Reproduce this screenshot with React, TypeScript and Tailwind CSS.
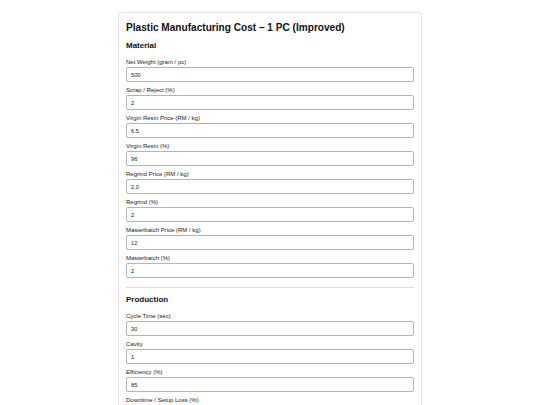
import React from 'react';

type Field = { label: string; value: string };

const material: Field[] = [
  { label: 'Net Weight (gram / pc)', value: '500' },
  { label: 'Scrap / Reject (%)', value: '2' },
  { label: 'Virgin Resin Price (RM / kg)', value: '6.5' },
  { label: 'Virgin Resin (%)', value: '96' },
  { label: 'Regrind Price (RM / kg)', value: '2.0' },
  { label: 'Regrind (%)', value: '2' },
  { label: 'Masterbatch Price (RM / kg)', value: '12' },
  { label: 'Masterbatch (%)', value: '2' },
];

const production: Field[] = [
  { label: 'Cycle Time (sec)', value: '30' },
  { label: 'Cavity', value: '1' },
  { label: 'Efficiency (%)', value: '85' },
  { label: 'Downtime / Setup Loss (%)', value: '5' },
  { label: 'Machine Rate (RM / hr)', value: '25' },
];

const FieldRow: React.FC<{ field: Field; gap?: string }> = ({ field }) => (
  <div className="mb-[4px]">
    <label className="block text-[6px] leading-[8px] text-[#222]">{field.label}</label>
    <input
      type="text"
      readOnly
      defaultValue={field.value}
      className="mt-[1px] block h-[15px] w-full rounded-[2px] border border-[#b4b4b4] bg-white px-[4px] text-[5.7px] text-[#222] outline-none"
    />
  </div>
);

export default function App() {
  return (
    <div className="min-h-screen bg-white pt-[12px] font-['Liberation_Sans',Arial,sans-serif]">
      <div className="mx-auto w-[304px] rounded-[4px] border border-[#e4e4e4] px-[7px] pt-[9px] pb-[10px] shadow-[0_0_3px_rgba(0,0,0,0.06)]">
        <h2 className="text-[10.1px] font-bold leading-[12px] text-[#111]">
          Plastic Manufacturing Cost – 1 PC (Improved)
        </h2>

        {/* Material */}
        <h3 className="mt-[7px] mb-[7px] text-[8px] font-bold leading-[10px] text-[#111]">Material</h3>
        {material.map((f) => (
          <FieldRow key={f.label} field={f} />
        ))}

        <hr className="mt-[9px] mb-[7px] border-0 border-t border-[#dcdcdc]" />

        {/* Production */}
        <h3 className="mb-[7px] text-[8px] font-bold leading-[10px] text-[#111]">Production</h3>
        {production.map((f) => (
          <FieldRow key={f.label} field={f} />
        ))}
      </div>
    </div>
  );
}
